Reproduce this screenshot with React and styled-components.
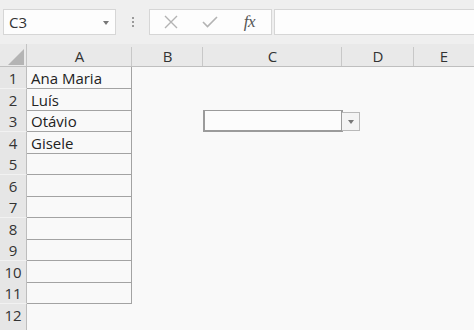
import React from "react";
import styled, { createGlobalStyle } from "styled-components";

const Global = createGlobalStyle`
  html, body { margin: 0; padding: 0; background: #f9f9f9; }
  body { font-family: "Open Sans", "Noto Sans", sans-serif; overflow: hidden; }
`;

const Page = styled.div`
  width: 474px;
  height: 330px;
  overflow: hidden;
  display: flex;
  flex-direction: column;
  background: #f9f9f9;
`;

const Toolbar = styled.div`
  height: 44px;
  flex: none;
  background: #efefef;
  display: flex;
  align-items: flex-start;
  padding-top: 9px;
  box-sizing: border-box;
`;

const Box = styled.div`
  height: 26px;
  box-sizing: border-box;
  background: #fdfdfd;
  border: 1px solid #d6d6d6;
  display: flex;
  align-items: center;
  flex: none;
`;

const NameBox = styled(Box)`
  width: 113px;
  margin-left: 3px;
  padding: 0 6px 0 5px;
  justify-content: space-between;
  font-size: 15px;
  color: #333;
`;

const Caret = styled.span`
  width: 0;
  height: 0;
  border-left: 3.5px solid transparent;
  border-right: 3.5px solid transparent;
  border-top: 4px solid #777;
  margin-top: 1px;
`;

const Grip = styled.div`
  width: 33px;
  height: 26px;
  display: flex;
  flex-direction: column;
  align-items: center;
  justify-content: center;
  gap: 2px;
  flex: none;
  & > span {
    width: 2px;
    height: 2px;
    background: #9a9a9a;
  }
`;

const ButtonsBox = styled(Box)`
  width: 123px;
  justify-content: space-around;
  padding: 0 2px 0 1px;
`;

const IconBtn = styled.div`
  width: 40px;
  display: flex;
  justify-content: center;
  align-items: center;
`;

const Fx = styled.span`
  font-family: "Liberation Serif", "DejaVu Serif", serif;
  font-style: italic;
  font-size: 17px;
  color: #555;
  letter-spacing: -0.5px;
`;

const FormulaBox = styled(Box)`
  margin-left: 2px;
  flex: 1;
  border-right: none;
`;

const Sheet = styled.div`
  display: flex;
  flex-direction: column;
  flex: 1;
`;

const cols = "27px 105px 71px 139px 72px 1fr";

const HeadRow = styled.div`
  display: grid;
  grid-template-columns: ${cols};
  height: 23px;
  flex: none;
  background: #e9e9e9;
  border-bottom: 1px solid #bfbfbf;
  box-sizing: border-box;
`;

const Corner = styled.div`
  border-right: 1px solid #c4c4c4;
  position: relative;
  & > span {
    position: absolute;
    right: 2px;
    bottom: 1px;
    width: 0;
    height: 0;
    border-left: 16px solid transparent;
    border-bottom: 16px solid #b4b4b4;
  }
`;

const ColHead = styled.div`
  display: flex;
  align-items: center;
  justify-content: center;
  font-size: 15px;
  color: #333;
  position: relative;
  padding-top: 1px;
  &::after {
    content: "";
    position: absolute;
    right: 0;
    top: 3px;
    bottom: 0;
    width: 1px;
    background: ${(p) => (p.$last ? "transparent" : "#c8c8c8")};
  }
`;

const Row = styled.div`
  display: grid;
  grid-template-columns: ${cols};
  height: 21.5px;
  flex: none;
`;

const RowHead = styled.div`
  background: #e6e6e6;
  border-right: 1px solid #bdbdbd;
  border-bottom: 1px solid #f2f2f2;
  box-sizing: border-box;
  display: flex;
  align-items: center;
  justify-content: center;
  font-size: 15px;
  color: #333;
  padding-top: 1px;
`;

const Cell = styled.div`
  box-sizing: border-box;
  display: flex;
  align-items: center;
  padding-left: 4px;
  font-size: 15px;
  color: #222;
  padding-top: 1px;
  position: relative;
  ${(p) =>
    p.$bordered &&
    `border-right: 1px solid #a3a3a3; border-bottom: 1px solid #a3a3a3;`}
`;

const DropCell = styled.div`
  position: relative;
  display: flex;
  align-items: stretch;
  padding: 0;
`;

const Combo = styled.div`
  flex: 1;
  box-sizing: border-box;
  border: 2px solid #9b9b9b;
  border-top-width: 1px;
  background: #fcfcfc;
  margin: 0 -1px 0 0;
  height: 22px;
  position: relative;
`;

const ComboBtn = styled.div`
  position: absolute;
  left: 100%;
  top: 1px;
  width: 18px;
  height: 19px;
  box-sizing: border-box;
  border: 1px solid #b9b9b9;
  border-left: none;
  background: #f4f4f4;
  display: flex;
  align-items: center;
  justify-content: center;
  margin-left: 1px;
`;

const data = ["Ana Maria", "Luís", "Otávio", "Gisele"];

export default function App() {
  const rows = Array.from({ length: 13 }, (_, i) => i + 1);
  return (
    <Page>
      <Global />
      <Toolbar>
        <NameBox>
          <span>C3</span>
          <Caret />
        </NameBox>
        <Grip>
          <span />
          <span />
          <span />
        </Grip>
        <ButtonsBox>
          <IconBtn>
            <svg width="14" height="14" viewBox="0 0 14 14">
              <path d="M1 1 L13 13 M13 1 L1 13" stroke="#b3b3b3" strokeWidth="1.4" fill="none" />
            </svg>
          </IconBtn>
          <IconBtn>
            <svg width="16" height="12" viewBox="0 0 16 12">
              <path d="M1 6 L5.5 10.5 L15 1" stroke="#b3b3b3" strokeWidth="1.6" fill="none" />
            </svg>
          </IconBtn>
          <IconBtn>
            <Fx>fx</Fx>
          </IconBtn>
        </ButtonsBox>
        <FormulaBox />
      </Toolbar>
      <Sheet>
        <HeadRow>
          <Corner>
            <span />
          </Corner>
          <ColHead>A</ColHead>
          <ColHead>B</ColHead>
          <ColHead>C</ColHead>
          <ColHead>D</ColHead>
          <ColHead $last>E</ColHead>
        </HeadRow>
        {rows.map((r) => (
          <Row key={r}>
            <RowHead>{r <= 12 ? r : ""}</RowHead>
            <Cell $bordered={r <= 11}>{data[r - 1] || ""}</Cell>
            <Cell />
            {r === 3 ? (
              <DropCell>
                <Combo>
                  <ComboBtn>
                    <Caret />
                  </ComboBtn>
                </Combo>
              </DropCell>
            ) : (
              <Cell />
            )}
            <Cell />
            <Cell />
          </Row>
        ))}
      </Sheet>
    </Page>
  );
}
